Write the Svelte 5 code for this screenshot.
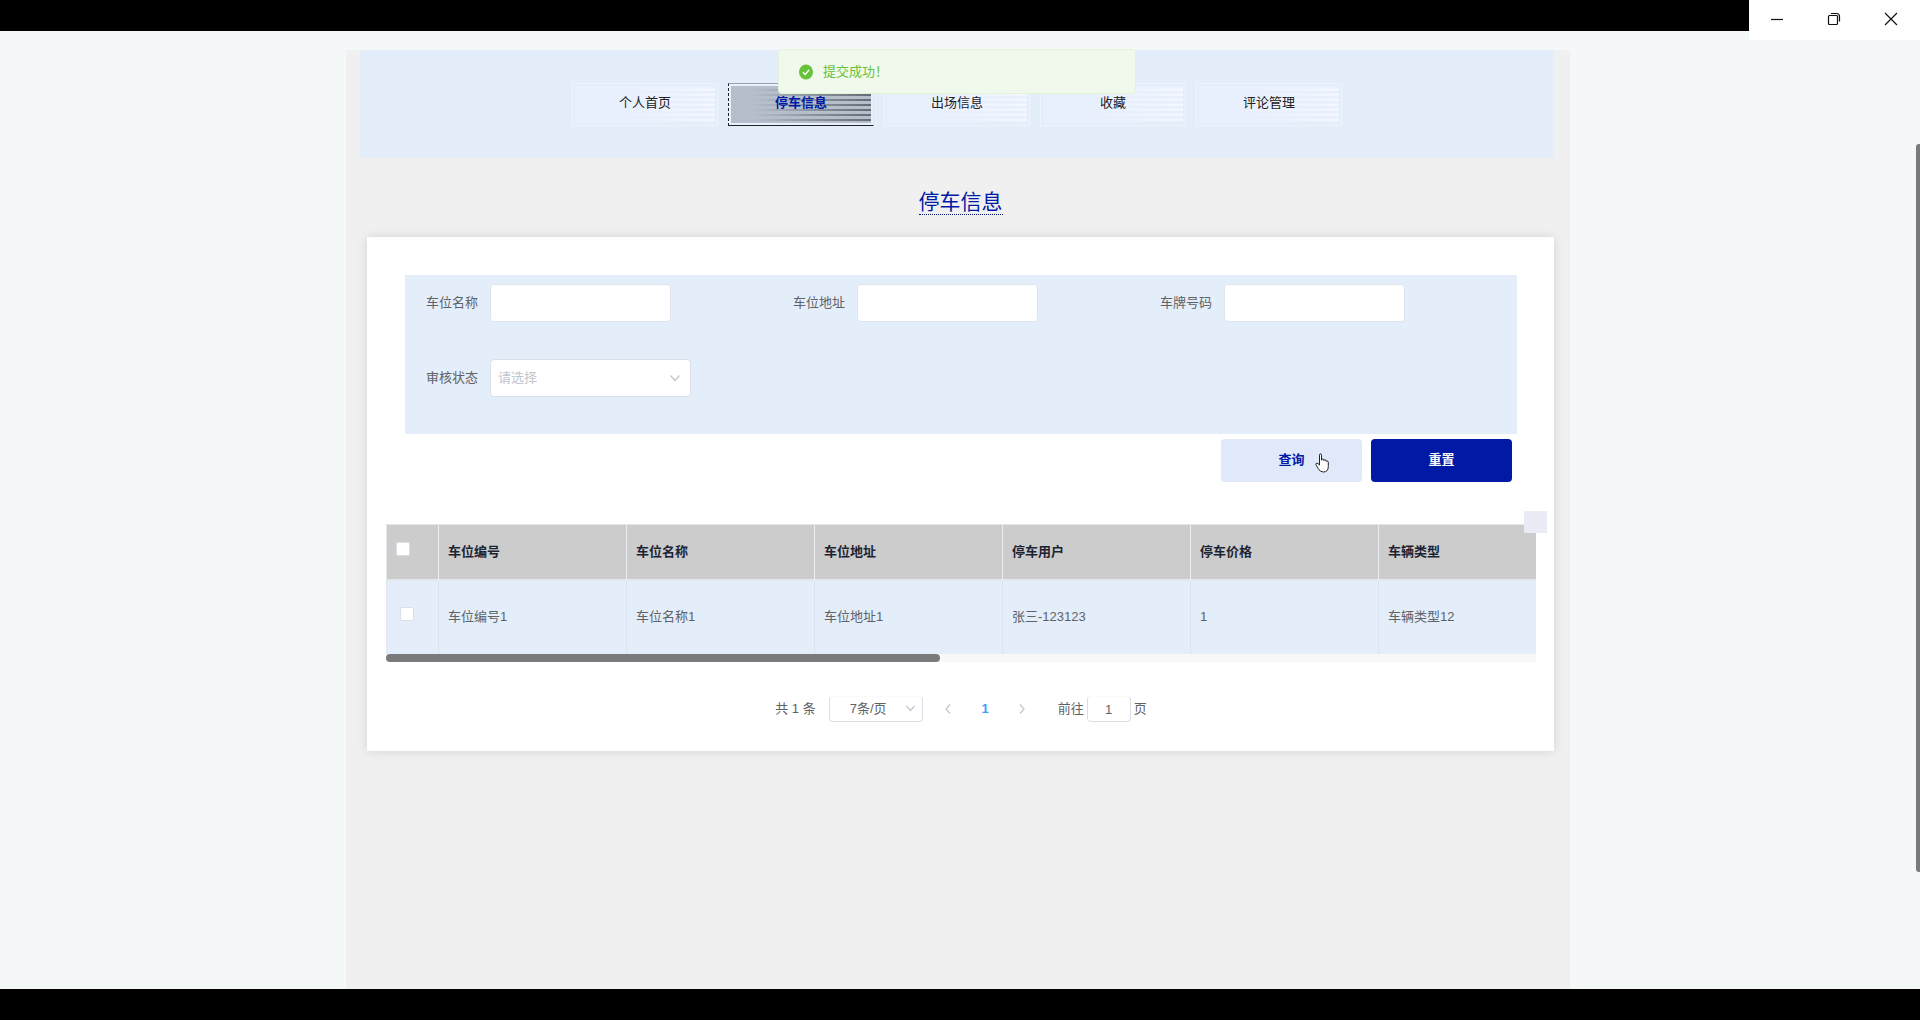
<script lang="ts">
    const navItems = ["个人首页", "停车信息", "出场信息", "收藏", "评论管理"];

    const columns = [
        "车位编号",
        "车位名称",
        "车位地址",
        "停车用户",
        "停车价格",
        "车辆类型",
    ];

    const rows = [
        ["车位编号1", "车位名称1", "车位地址1", "张三-123123", "1", "车辆类型12"],
    ];

    let activeNav = $state("停车信息");
    let name = $state("");
    let address = $state("");
    let plate = $state("");
    let status = $state("");
    let pageSize = $state("7");
    let currentPage = $state("1");
    let selected: boolean[] = $state(rows.map(() => false));

    let allSelected = $derived(selected.every((s) => s));

    function toggleAll() {
        const next = !allSelected;
        selected = selected.map(() => next);
    }

    function reset() {
        name = "";
        address = "";
        plate = "";
        status = "";
    }
</script>

<div class="window">
    <div class="titlebar"></div>
    <div class="window-controls">
        <button aria-label="最小化">
            <svg width="14" height="14" viewBox="0 0 14 14">
                <path d="M1 7.5H13" />
            </svg>
        </button>
        <button aria-label="还原">
            <svg width="14" height="14" viewBox="0 0 14 14">
                <path d="M4 1.5H9.5Q12.5 1.5 12.5 4.5V9.5" />
                <rect x="1.5" y="3.5" width="9" height="9" rx="1" />
            </svg>
        </button>
        <button aria-label="关闭">
            <svg width="14" height="14" viewBox="0 0 14 14">
                <path d="M1 1L13 13M13 1L1 13" />
            </svg>
        </button>
    </div>

    <div class="viewport">
        <div class="toast" role="status">
            <svg width="14" height="16" viewBox="0 0 14 16">
                <ellipse cx="7" cy="8" rx="7" ry="7.5" fill="#67c23a" />
                <path d="M4 8.2L6.2 10.4L10.2 5.8" fill="none" stroke="#fff" stroke-width="1.4" />
            </svg>
            <span>提交成功！</span>
        </div>

        <div class="page">
            <nav class="nav">
                {#each navItems as item}
                    <button
                        class="nav-item"
                        class:active={item === activeNav}
                        onclick={() => (activeNav = item)}
                    >
                        <span>{item}</span>
                    </button>
                {/each}
            </nav>

            <h1 class="title"><span>停车信息</span></h1>

            <main class="card">
                <form class="search" onsubmit={(e) => e.preventDefault()}>
                    <div class="fields">
                        <div class="field">
                            <label for="name">车位名称</label>
                            <input id="name" type="text" bind:value={name} />
                        </div>
                        <div class="field">
                            <label for="address">车位地址</label>
                            <input id="address" type="text" bind:value={address} />
                        </div>
                        <div class="field">
                            <label for="plate">车牌号码</label>
                            <input id="plate" type="text" bind:value={plate} />
                        </div>
                        <div class="field">
                            <label for="status">审核状态</label>
                            <div class="select">
                                <select id="status" class:empty={status === ""} bind:value={status}>
                                    <option value="">请选择</option>
                                    <option value="yes">通过</option>
                                    <option value="no">未通过</option>
                                </select>
                                <svg width="10" height="8" viewBox="0 0 10 8">
                                    <path d="M0.5 1.5L5 6.5L9.5 1.5" />
                                </svg>
                            </div>
                        </div>
                    </div>
                    <div class="actions">
                        <button class="btn query" type="submit">
                            查询
                            <svg class="pointer" width="14" height="20" viewBox="0 0 14 20">
                                <path
                                    d="M4.5 12V2.2Q4.5 0.8 5.5 0.8T6.5 2.2V7.2Q6.7 6 7.8 6T9 7.6Q9.3 6.7 10.2 6.7T11.3 8.4Q11.6 7.8 12.3 7.9T13.3 9.2V13.5Q13.3 19 8.3 19Q5 19 3.4 15.8L0.9 11.8Q0.6 10.4 1.8 10.2Q2.8 10.1 4.5 12Z"
                                    fill="#fff"
                                    stroke="#222"
                                />
                            </svg>
                        </button>
                        <button class="btn reset" type="button" onclick={reset}>重置</button>
                    </div>
                </form>

                <div class="table-wrap">
                    <table>
                        <colgroup>
                            <col class="col-check" />
                            {#each columns.slice(1) as _}
                                <col class="col-data" />
                            {/each}
                            <col />
                        </colgroup>
                        <thead>
                            <tr>
                                <th>
                                    <input
                                        type="checkbox"
                                        aria-label="全选"
                                        checked={allSelected}
                                        onchange={toggleAll}
                                    />
                                </th>
                                {#each columns as column}
                                    <th>{column}</th>
                                {/each}
                            </tr>
                        </thead>
                        <tbody>
                            {#each rows as row, i}
                                <tr>
                                    <td>
                                        <input
                                            type="checkbox"
                                            aria-label={row[0]}
                                            bind:checked={selected[i]}
                                        />
                                    </td>
                                    {#each row as cell}
                                        <td>{cell}</td>
                                    {/each}
                                </tr>
                            {/each}
                        </tbody>
                    </table>
                    <div class="scroll-track">
                        <div class="scroll-thumb"></div>
                    </div>
                    <div class="corner"></div>
                </div>

                <div class="pagination">
                    <span>共 1 条</span>
                    <div class="select size">
                        <select aria-label="每页条数" bind:value={pageSize}>
                            <option value="7">7条/页</option>
                            <option value="14">14条/页</option>
                        </select>
                        <svg width="9" height="7" viewBox="0 0 9 7">
                            <path d="M0.5 1L4.5 5.5L8.5 1" />
                        </svg>
                    </div>
                    <div class="pager">
                        <button aria-label="上一页" disabled>
                            <svg width="8" height="10" viewBox="0 0 8 10">
                                <path d="M6 0.5L2 5L6 9.5" />
                            </svg>
                        </button>
                        <button class="current">1</button>
                        <button aria-label="下一页" disabled>
                            <svg width="8" height="10" viewBox="0 0 8 10">
                                <path d="M2 0.5L6 5L2 9.5" />
                            </svg>
                        </button>
                    </div>
                    <label class="jump">
                        前往
                        <input type="text" bind:value={currentPage} />
                        页
                    </label>
                </div>
            </main>
        </div>

        <div class="page-thumb"></div>
    </div>
</div>

<style>
    :global(body) {
        background: #000;
    }

    .window {
        position: relative;
        display: flex;
        flex-direction: column;
        box-sizing: border-box;
        height: 100vh;
        padding-bottom: 31px;
        font-family: "Liberation Sans", "Noto Sans CJK SC", sans-serif;
        font-size: 13px;
        line-height: 20px;
        color: #606266;
    }

    .window * {
        box-sizing: border-box;
    }

    button,
    input,
    select {
        margin: 0;
        padding: 0;
        border: none;
        font: inherit;
        color: inherit;
    }

    button {
        background: none;
        cursor: pointer;
    }

    .titlebar {
        flex: none;
        height: 31px;
        background: #000;
    }

    .window-controls {
        position: absolute;
        z-index: 3;
        top: 0;
        right: 0;
        display: flex;
        height: 40px;
        background: #fff;
    }

    .window-controls button {
        display: grid;
        place-items: center;
        width: 57px;
        padding: 0 2px 2px 0;
    }

    .window-controls svg {
        fill: none;
        stroke: #111;
        stroke-width: 1.2;
    }

    .viewport {
        position: relative;
        display: flex;
        flex: 1;
        justify-content: center;
        min-height: 0;
        padding: 19px 4px 0 0;
        overflow: hidden;
        background: #f4f8f9;
    }

    .page-thumb {
        position: absolute;
        top: 113px;
        right: 0;
        width: 4px;
        height: 76%;
        border-radius: 3px 0 0 3px;
        background: #7a7a7a;
    }

    .toast {
        position: absolute;
        z-index: 2;
        top: 18px;
        left: 50%;
        display: flex;
        align-items: center;
        gap: 10px;
        width: 358px;
        height: 45px;
        margin-left: -182px;
        padding: 0 20px;
        border: 1px solid #e1f3d8;
        border-radius: 4px;
        background: #f0f9eb;
        color: #67c23a;
    }

    .page {
        width: 100%;
        max-width: 1224px;
        background: #f0f0f0;
    }

    .nav {
        display: flex;
        justify-content: center;
        gap: 10px;
        height: 108px;
        margin: 0 16px 0 14px;
        padding: 33px 0 32px;
        background: #e4eefb;
    }

    .nav-item {
        width: 146px;
        padding: 2px;
        border: 1px solid #eef3fe;
        color: #222;
    }

    .nav-item span {
        display: flex;
        align-items: center;
        justify-content: center;
        height: 100%;
        padding-bottom: 4px;
        background:
            linear-gradient(90deg, #e9f0fd 35%, transparent),
            repeating-linear-gradient(#e9f0fd 0 2px, #fbfcff 4px, #e9f0fd 5px);
    }

    .nav-item.active {
        border-color: #9aa2b0 #dfe7f5 #222 #222;
        border-style: solid solid solid dashed;
        background: #e9f0fd;
        color: #001aa5;
        font-weight: bold;
    }

    .nav-item.active span {
        background:
            linear-gradient(90deg, #b5becb 15%, transparent),
            repeating-linear-gradient(#b5becb 0 3px, #15181c 4px, #b5becb 5px);
    }

    .title {
        display: flex;
        justify-content: center;
        margin: 0;
        padding: 32px 0 22px 5px;
        font-size: 21px;
        font-weight: normal;
        line-height: 24px;
        color: #001aa5;
    }

    .title span {
        border-bottom: 1px dotted #00116a;
    }

    .card {
        margin: 0 16px 0 21px;
        padding: 38px 18px 29px 19px;
        background: #fff;
        box-shadow: 0 0 10px rgba(0, 0, 0, 0.12);
    }

    .search {
        margin: 0 19px;
    }

    .fields {
        display: grid;
        grid-template-columns: repeat(3, 33%);
        row-gap: 37px;
        padding: 9px 0 37px;
        background: #e4eefb;
    }

    .field {
        display: flex;
        align-items: center;
        gap: 12px;
        padding-left: 21px;
    }

    .field input {
        width: 181px;
        height: 38px;
        padding: 0 8px;
        border: 1px solid #dfe5ee;
        border-radius: 4px;
        background: #fff;
    }

    .select {
        position: relative;
        width: 201px;
        height: 38px;
    }

    .select select {
        appearance: none;
        width: 100%;
        height: 100%;
        padding: 0 7px;
        border: 1px solid #dcdfe6;
        border-radius: 4px;
        background: #fff;
    }

    .select select.empty {
        color: #c0c4cc;
    }

    .select svg {
        position: absolute;
        top: 50%;
        right: 11px;
        margin-top: -4px;
        pointer-events: none;
    }

    .select svg,
    .pager svg {
        fill: none;
        stroke: #c0c4cc;
        stroke-width: 1.2;
    }

    .actions {
        display: flex;
        justify-content: flex-end;
        gap: 9px;
        padding: 5px 5px 0 0;
    }

    .btn {
        position: relative;
        width: 141px;
        height: 43px;
        padding-bottom: 1px;
        border-radius: 4px;
        font-weight: bold;
    }

    .query {
        background: #e0e9fa;
        color: #001aa5;
    }

    .reset {
        background: #001aa5;
        color: #fff;
    }

    .pointer {
        position: absolute;
        top: 14px;
        left: 94px;
    }

    .table-wrap {
        position: relative;
        margin-top: 42px;
    }

    .corner {
        position: absolute;
        top: -13px;
        right: -11px;
        width: 23px;
        height: 22px;
        background: #e9ecf5;
    }

    table {
        width: 100%;
        border-spacing: 0;
        table-layout: fixed;
        border-top: 1px solid #e3e6ea;
        border-left: 1px solid #e3e6ea;
    }

    .col-check {
        width: 52px;
    }

    .col-data {
        width: 188px;
    }

    th,
    td {
        padding: 0 9px;
        border-right: 1px solid #dce3ee;
        text-align: left;
    }

    th {
        height: 56px;
        border-right-color: #ebeef5;
        border-bottom: 2px solid #e3e7ed;
        background: #ccc;
        color: #1c2433;
    }

    td {
        height: 73px;
        padding-bottom: 2px;
        background: #e4eefb;
    }

    th:last-child,
    td:last-child {
        border-right: none;
    }

    td:first-child {
        padding-left: 13px;
    }

    input[type="checkbox"] {
        display: block;
        appearance: none;
        width: 14px;
        height: 14px;
        margin-bottom: 6px;
        border: 1px solid #dcdfe6;
        border-radius: 2px;
        background: #fff;
    }

    input[type="checkbox"]:checked {
        background: #409eff;
    }

    .scroll-track {
        height: 8px;
        background: #f8f8f8;
    }

    .scroll-thumb {
        width: 48.2%;
        height: 100%;
        border-radius: 4px;
        background: #7a7a7c;
    }

    .pagination {
        display: flex;
        align-items: center;
        justify-content: center;
        height: 26px;
        margin-top: 34px;
    }

    .size {
        width: 94px;
        height: 26px;
        margin: 0 7px 0 13px;
    }

    .size select {
        padding: 0 20px;
        border-top-color: #fafafa;
    }

    .size svg {
        right: 8px;
    }

    .pager {
        display: flex;
    }

    .pager button {
        display: grid;
        place-items: center;
        width: 37px;
        height: 26px;
    }

    .pager .current {
        color: #409eff;
        font-weight: bold;
    }

    .jump {
        display: flex;
        align-items: center;
        gap: 3px;
        margin-left: 17px;
    }

    .jump input {
        width: 44px;
        height: 26px;
        border: 1px solid #dcdfe6;
        border-top-color: #fafafa;
        border-radius: 4px;
        text-align: center;
    }
</style>
